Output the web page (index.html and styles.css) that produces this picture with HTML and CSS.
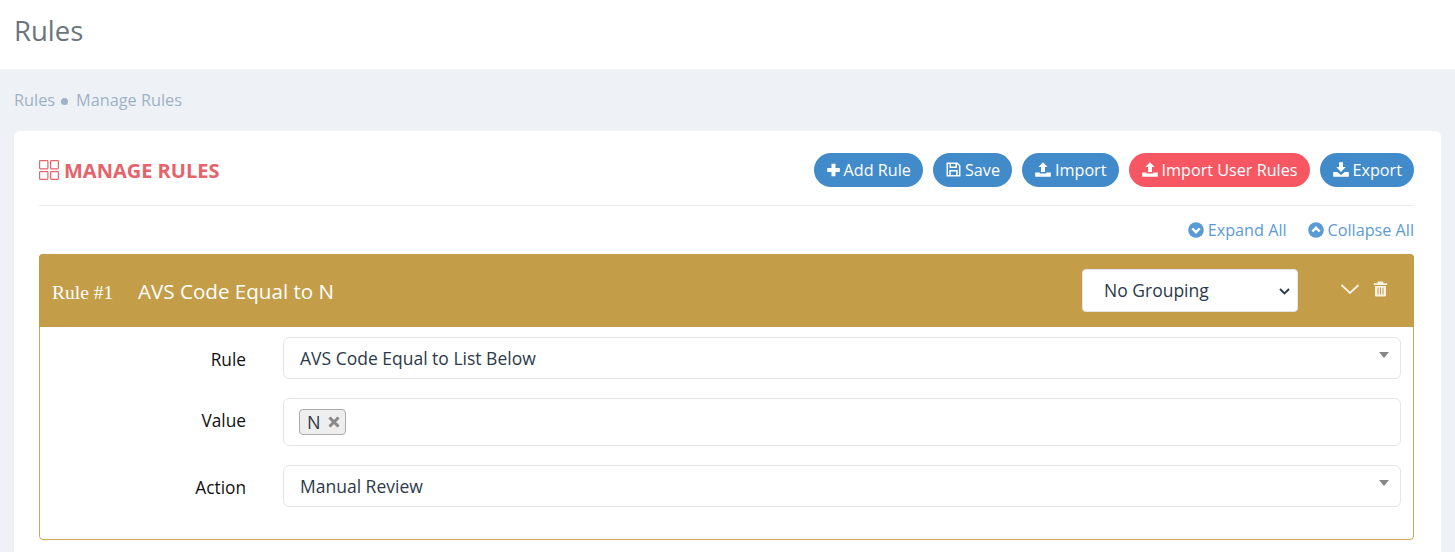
FILE: index.html
```html
<!DOCTYPE html>
<html lang="en">
<head>
<meta charset="utf-8">
<title>Rules</title>
<link rel="stylesheet" href="styles.css">
</head>
<body>
<header class="page-head"><h1>Rules</h1></header>
<main class="content">
  <nav class="crumbs"><span>Rules</span><i class="dot"></i><span>Manage Rules</span></nav>
  <section class="card">
    <div class="card-head">
      <h2 class="title">
        <svg class="grid-icon" width="20" height="20" viewBox="0 0 20 20" fill="none" stroke="currentColor" stroke-width="1.2"><rect x=".6" y=".6" width="8.300" height="8.300" rx=".8"/><rect x="11.600" y=".6" width="7.800" height="8.300" rx=".8"/><rect x=".6" y="11.600" width="8.300" height="7.800" rx=".8"/><rect x="11.600" y="11.600" width="7.800" height="7.800" rx=".8"/></svg>
        MANAGE RULES
      </h2>
      <div class="actions">
        <button class="btn"><svg width="13" height="14" viewBox="0 0 13 14"><path fill="currentColor" d="M4.500.8h4v4.200h4.300v4H8.500v4.200h-4V9H.2V5h4.300z"/></svg>Add Rule</button>
        <button class="btn"><svg width="15" height="15" viewBox="0 0 14 14" fill="none" stroke="currentColor" stroke-width="1.400"><path d="M1.200 1.200h9.300l2.300 2.300v9.300H1.200z"/><path d="M4 1.200v3.800h5.500V1.200M3.800 12.800V8.200h6.400v4.600"/></svg>Save</button>
        <button class="btn"><svg width="16" height="15" viewBox="0 0 16 15"><path fill="currentColor" d="M8 .2l4.600 4.900H10V10H6V5.100H3.400zM.2 10.500h4.500v1h6.600v-1h4.500v4.200H.2z"/></svg>Import</button>
        <button class="btn red"><svg width="16" height="15" viewBox="0 0 16 15"><path fill="currentColor" d="M8 .2l4.600 4.900H10V10H6V5.100H3.400zM.2 10.500h4.500v1h6.600v-1h4.500v4.200H.2z"/></svg>Import User Rules</button>
        <button class="btn"><svg width="16" height="15" viewBox="0 0 16 15"><path fill="currentColor" d="M6 .2h4v4.700h2.700L8 9.900 3.300 4.900H6zM.2 10h3.900L8 12.900 11.900 10h3.900v4.700H.2z"/></svg>Export</button>
      </div>
    </div>
    <div class="toggles">
      <a class="toggle"><svg width="16" height="16" viewBox="0 0 16 16"><circle cx="8" cy="8" r="7.800" fill="currentColor"/><path d="M4.300 6.500L8 10.200l3.700-3.700" fill="none" stroke="#fff" stroke-width="2.400"/></svg>Expand All</a>
      <a class="toggle"><svg width="16" height="16" viewBox="0 0 16 16"><circle cx="8" cy="8" r="7.800" fill="currentColor"/><path d="M4.300 9.500L8 5.800l3.700 3.700" fill="none" stroke="#fff" stroke-width="2.400"/></svg>Collapse All</a>
    </div>
    <article class="rule">
      <div class="rule-head">
        <span class="rule-num">Rule #1</span>
        <span class="rule-name">AVS Code Equal to N</span>
        <div class="grouping-wrap">
          <select class="grouping"><option>No Grouping</option></select>
          <svg class="grouping-arrow" width="11" height="7" viewBox="0 0 11 7" fill="none" stroke="currentColor" stroke-width="1.900"><path d="M1 1l4.500 4.500L10 1"/></svg>
        </div>
        <svg class="chevron" width="20" height="12" viewBox="0 0 20 12" fill="none" stroke="currentColor" stroke-width="2"><path d="M1.500 2L10 10l8.500-8"/></svg>
        <svg class="trash" width="15" height="16" viewBox="0 0 15 16"><path fill="currentColor" fill-rule="evenodd" d="M5.200.5h4.600l1 1.800h3.400v1.700H.8V2.300h3.400zM2 5h11v9.200c0 .8-.6 1.300-1.300 1.300H3.300c-.7 0-1.300-.5-1.300-1.300zM4.500 6.500v7h1v-7zm2.500 0v7h1v-7zm2.500 0v7h1v-7z"/></svg>
      </div>
      <div class="rule-body">
        <div class="field">
          <label class="field-label">Rule</label>
          <div class="select-box">AVS Code Equal to List Below<i class="caret"></i></div>
        </div>
        <div class="field">
          <label class="field-label">Value</label>
          <div class="tags-box"><span class="tag">N<svg class="tag-x" width="12" height="12" viewBox="0 0 12 12" fill="none" stroke="currentColor" stroke-width="3"><path d="M1.500 1.500l9 9M10.500 1.500l-9 9"/></svg></span></div>
        </div>
        <div class="field">
          <label class="field-label">Action</label>
          <div class="select-box">Manual Review<i class="caret"></i></div>
        </div>
      </div>
    </article>
  </section>
</main>
</body>
</html>
```
FILE: styles.css
```css
* { box-sizing: border-box; }
html, body { margin: 0; height: 100%; overflow: hidden; }
body { background: #eef2f7; font-family: "Open Sans", sans-serif; font-size: 16px; color: #2c3a4b; }
.page-head { background: #fff; height: 69px; padding: 0 14px; display: flex; align-items: center; }
.page-head h1 { margin: 0 0 8px; font-size: 27.5px; font-weight: 400; color: #6c757d; }
.content { padding: 0 14px; }
.crumbs { height: 62px; display: flex; align-items: center; gap: 6px; color: #9fb1c6; font-size: 16.3px; }
.dot { width: 7px; height: 7px; border-radius: 50%; background: #9fb1c6; margin: 2px 2px 0 0; }
.card { background: #fff; border-radius: 6px; padding: 0 27px 0 25px; height: 440px; }
.card-head { height: 75px; display: flex; align-items: center; justify-content: space-between; border-bottom: 1px solid #ebedf0; padding-top: 4px; }
.title { margin: 0; display: flex; align-items: center; gap: 5px; font-size: 20px; font-weight: 700; color: #e4646a; }
.grid-icon { color: #e4646a; }
.actions { display: flex; gap: 10px; }
.btn { height: 34px; border: 0; border-radius: 17px; background: #428bca; color: #fff; font: 400 16.2px "Open Sans", sans-serif; padding: 0 12px 1px 13px; display: flex; align-items: center; gap: 4px; }
.btn.red { background: #f65763; }
.toggles { height: 48px; display: flex; justify-content: flex-end; align-items: center; gap: 21px; color: #5b9bd5; font-size: 16.2px; }
.toggle { display: flex; align-items: center; gap: 4px; }
.rule { height: 286px; border: 1px solid #c9a75e; border-radius: 4px; }
.rule-head { background: #c49d48; height: 73px; margin: -1px -1px 0; border-radius: 4px 4px 0 0; display: flex; align-items: center; padding: 0 26px 0 13px; color: #fff; }
.rule-num { font-family: "Liberation Serif", serif; font-size: 19.500px; width: 86px; margin-top: 4px; }
.rule-name { font-size: 20.600px; flex: 1; margin-top: 1px; }
.grouping-wrap { position: relative; width: 216px; height: 43px; }
.grouping { appearance: none; width: 100%; height: 100%; border: 1px solid #e4e6eb; border-radius: 4px; background: #fff; color: #2c3a4b; font: 400 17.500px "Open Sans", sans-serif; padding: 0 21px 2px; }
.grouping-arrow { position: absolute; right: 8px; top: 19px; color: #2c3a4b; }
.chevron { margin-left: 42px; color: #f6efdd; margin-top: -3px; }
.trash { margin-left: 13px; color: #f8f2e2; margin-top: -4px; }
.rule-body { padding: 10px 12px 0 0; display: flex; flex-direction: column; }
.field { display: flex; margin-bottom: 19px; }
.field-label { width: 206px; height: 42px; text-align: right; margin-right: 37px; font-size: 17.300px; color: #111; line-height: 46px; }
.select-box { flex: 1; height: 42px; border: 1px solid #e4e6eb; border-radius: 6px; display: flex; align-items: center; padding: 0 16px; font-size: 17.500px; color: #2c3a4b; position: relative; }
.tags-box { flex: 1; height: 48px; border: 1px solid #e4e6eb; border-radius: 6px; padding: 10px 15px 0; }
.tag { display: inline-flex; align-items: center; height: 26px; padding: 0 5px 0 7px; gap: 7px; border: 1px solid #aaa; border-radius: 4px; background: #eee; font-size: 18px; color: #2c3a4b; }
.tag-x { color: #888; }
.caret { position: absolute; right: 11px; top: 14px; border: 5px solid transparent; border-top: 6px solid #888; border-bottom: 0; }
```
